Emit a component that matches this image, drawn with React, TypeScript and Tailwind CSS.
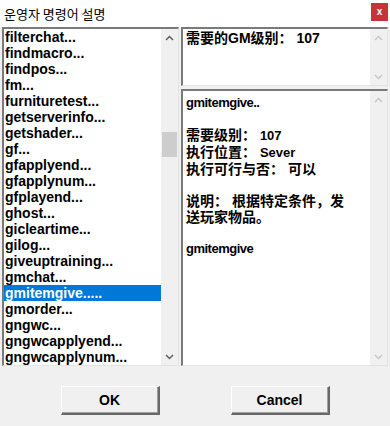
import React from 'react';

const commands = [
  'filterchat...',
  'findmacro...',
  'findpos...',
  'fm...',
  'furnituretest...',
  'getserverinfo...',
  'getshader...',
  'gf...',
  'gfapplyend...',
  'gfapplynum...',
  'gfplayend...',
  'ghost...',
  'gicleartime...',
  'gilog...',
  'giveuptraining...',
  'gmchat...',
  'gmitemgive.....',
  'gmorder...',
  'gngwc...',
  'gngwcapplyend...',
  'gngwcapplynum...',
];

function Chevron({ down, light }: { down?: boolean; light?: boolean }) {
  return (
    <svg width="9" height="6" viewBox="0 0 9 6">
      <path
        d={down ? 'M1 1 L4.5 4.5 L8 1' : 'M1 5 L4.5 1.5 L8 5'}
        fill="none"
        stroke={light ? '#c8c8c8' : '#606060'}
        strokeWidth="1.5"
      />
    </svg>
  );
}

function ScrollBar({ light, thumb }: { light?: boolean; thumb?: boolean }) {
  return (
    <div className="flex w-[17px] flex-col bg-[#f0f0f0]">
      <div className="flex h-[17px] items-center justify-center">
        <Chevron light={light} />
      </div>
      <div className="flex-1">
        {thumb ? <div className="mx-[1px] mt-[86px] h-[25px] bg-[#cdcdcd]" /> : null}
      </div>
      <div className="flex h-[17px] items-center justify-center">
        <Chevron down light={light} />
      </div>
    </div>
  );
}

const sunken = 'flex border-t-2 border-l-2 border-r border-b border-t-[#7a7a7a] border-l-[#7a7a7a] border-r-[#e3e3e3] border-b-[#e3e3e3] bg-white';

export default function App() {
  return (
    <div
      className="flex h-[426px] w-[390px] flex-col bg-[#f0f0f0] text-black"
      style={{ fontFamily: '"Liberation Sans", "Noto Sans CJK SC", sans-serif' }}
    >
      <div className="flex h-[27px] items-center justify-between bg-white pl-[4px] pr-[2px]">
        <span className="text-[13px]" style={{ fontFamily: '"Noto Sans CJK KR", sans-serif' }}>
          운영자 명령어 설명
        </span>
        <div className="mb-[4px] flex h-[18px] w-[17px] items-center justify-center bg-[#c8323a] text-[10px] font-bold leading-none text-white">
          x
        </div>
      </div>

      <div className="flex h-[339px] gap-[2px] px-[2px]">
        <div className={`${sunken} w-[177px]`}>
          <div className="flex-1 overflow-hidden">
            {commands.map((cmd) => (
              <div
                key={cmd}
                className={`h-[16px] pl-[1px] text-[14px] font-bold leading-[16px] ${
                  cmd === 'gmitemgive.....' ? 'bg-[#0078d7] text-white' : ''
                }`}
              >
                {cmd}
              </div>
            ))}
          </div>
          <ScrollBar thumb />
        </div>

        <div className="flex flex-1 flex-col gap-[3px]">
          <div className={`${sunken} h-[59px]`}>
            <div className="flex-1 pl-[3px] pt-[1px] text-[14px] font-bold leading-[16px]">
              需要的GM级别： 107
            </div>
            <ScrollBar light />
          </div>
          <div className={`${sunken} flex-1`}>
            <div className="flex-1 pl-[3px] pt-[4px] text-[14px] font-bold leading-[16px]">
              <div className="text-[13px] tracking-[-0.5px]">gmitemgive..</div>
              <div className="h-[16px]" />
              <div>需要级别： <span className="text-[13px]">107</span></div>
              <div>执行位置： <span className="text-[13px]">Sever</span></div>
              <div>执行可行与否： 可以</div>
              <div className="h-[16px]" />
              <div>说明： 根据特定条件，发</div>
              <div>送玩家物品。</div>
              <div className="h-[16px]" />
              <div className="text-[13px] tracking-[-0.5px]">gmitemgive</div>
            </div>
            <ScrollBar light />
          </div>
        </div>
      </div>

      <div className="flex flex-1 items-start justify-center gap-[71px] pt-[20px]">
        {['OK', 'Cancel'].map((label) => (
          <div
            key={label}
            className="flex h-[29px] w-[99px] items-center justify-center border-t border-l border-r-2 border-b-2 border-t-[#ffffff] border-l-[#ffffff] border-r-[#696969] border-b-[#696969] bg-[#f0f0f0] text-[14px] font-bold shadow-[inset_-1px_-1px_0_#a0a0a0]"
          >
            {label}
          </div>
        ))}
      </div>
    </div>
  );
}
